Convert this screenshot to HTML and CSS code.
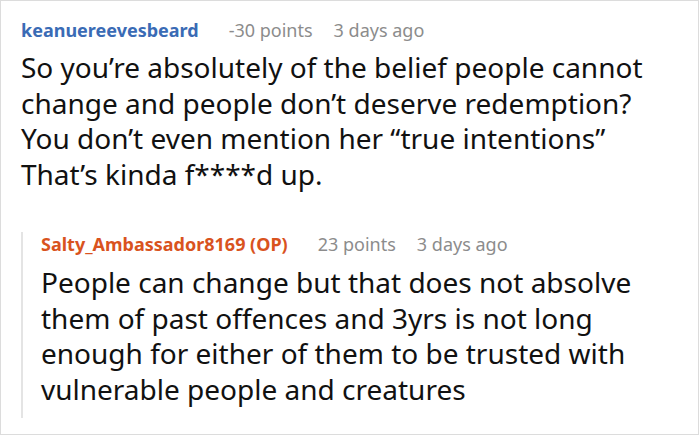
FILE: index.html
```html
<!DOCTYPE html>
<html>
<head>
<meta charset="utf-8">
<link rel="stylesheet" href="styles.css">
</head>
<body>
<div class="frame">
  <div class="comment">
    <div class="meta">
      <span class="author">keanuereevesbeard</span>
      <span class="info points">-30 points</span>
      <span class="info">3 days ago</span>
    </div>
    <p class="text">So you’re absolutely of the belief people cannot change and people don’t deserve redemption? You don’t even mention her “true intentions” That’s kinda f****d up.</p>
    <div class="reply">
      <div class="meta">
        <span class="author op">Salty_Ambassador8169 (OP)</span>
        <span class="info points">23 points</span>
        <span class="info">3 days ago</span>
      </div>
      <p class="text">People can change but that does not absolve them of past offences and 3yrs is not long enough for either of them to be trusted with vulnerable people and creatures</p>
    </div>
  </div>
</div>
</body>
</html>
```
FILE: styles.css
```css
html, body {
  margin: 0;
  padding: 0;
  background: #fff;
}
body {
  font-family: "Noto Sans", "Open Sans", sans-serif;
  color: #111;
}
.frame {
  width: 699px;
  height: 435px;
  box-sizing: border-box;
  border: 1px solid #dcdcdc;
  overflow: hidden;
}
.comment {
  padding: 17px 20px 0 20px;
}
.meta {
  display: flex;
  font-size: 18px;
  line-height: 24px;
  white-space: nowrap;
}
.author {
  font-weight: bold;
  color: #3a6bb5;
  margin-right: 30px;
}
.author.op {
  color: #d9531e;
}
.info {
  color: #8c8c8c;
}
.points {
  margin-right: 21px;
}
.text {
  margin: 8px 0 0 0;
  font-size: 28px;
  line-height: 35.5px;
}
.reply {
  margin-top: 48px;
  border-left: 2px solid #e4e4e4;
  padding: 0 0 11px 18px;
}
.reply .meta {
  margin-top: -8px;
}
.reply .text {
  margin-top: 9px;
}
```
